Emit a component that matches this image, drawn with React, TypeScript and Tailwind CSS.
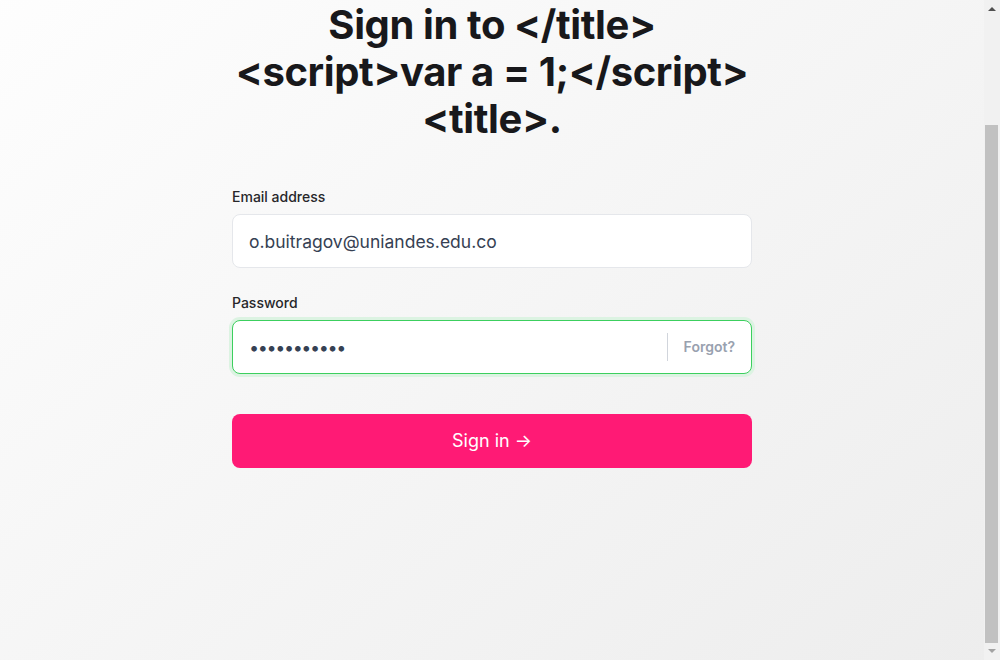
import React, { useEffect } from 'react';

// classic-style scrollbar drawn over the right edge, thumb at the bottom position
const Scrollbar: React.FC = () => (
  <div className="fixed right-0 top-0 flex h-screen w-4 flex-col bg-[#f1f1f1]">
    <div className="flex h-[17px] items-center justify-center">
      <svg width="8" height="5" viewBox="0 0 8 5">
        <path d="M0 5 L4 1 L8 5 Z" fill="#505050" />
      </svg>
    </div>
    <div className="flex-1">
      <div className="ml-px mt-[108px] h-[518px] w-[13px] bg-[#c1c1c1]" />
    </div>
    <div className="flex h-[17px] items-center justify-center">
      <svg width="8" height="5" viewBox="0 0 8 5">
        <path d="M0 0 L4 4 L8 0 Z" fill="#a3a3a3" />
      </svg>
    </div>
  </div>
);

const App: React.FC = () => {
  useEffect(() => {
    window.scrollTo(0, document.documentElement.scrollHeight);
  }, []);

  return (
    <div
      className="min-h-[803px] bg-gradient-to-br from-white to-[#ededed] pb-[192px] pr-4 pt-[144px] text-gray-900"
      style={{ fontFamily: 'Inter, "Noto Sans", sans-serif' }}
    >
      <div className="mx-auto w-[520px]">
        <h1 className="-mx-10 text-center text-[40px] font-bold leading-[47px] tracking-[-0.01em] text-[#18181b]">
          Sign in to &lt;/title&gt;
          <br />
          &lt;script&gt;var a = 1;&lt;/script&gt;
          <br />
          &lt;title&gt;.
        </h1>

        <form className="mt-[45px]" onSubmit={(e) => e.preventDefault()}>
          <label className="block text-sm font-medium leading-5 text-[#27272a]">Email address</label>
          <input
            type="email"
            defaultValue="o.buitragov@uniandes.edu.co"
            className="mt-[7px] block h-[54px] w-full rounded-lg border border-gray-200 bg-white px-4 text-[17.5px] text-gray-700 outline-none"
          />

          <label className="mt-[25px] block text-sm font-medium leading-5 text-[#27272a]">Password</label>
          <div className="mt-[7px] flex h-[54px] w-full items-center rounded-lg border border-[#3ccf5e] bg-white ring-[3px] ring-[#dcf3e2]">
            <input
              type="password"
              defaultValue="abcdefghijk"
              className="h-full min-w-0 flex-1 bg-transparent px-4 text-lg tracking-[-1.4px] text-gray-700 outline-none"
            />
            <div className="h-7 w-px bg-gray-300" />
            <button type="button" className="px-4 text-sm font-semibold text-gray-400">
              Forgot?
            </button>
          </div>

          <button
            type="submit"
            className="mt-10 flex h-[54px] w-full items-center justify-center rounded-lg bg-[#ff1a75] text-lg text-white"
          >
            Sign in →
          </button>
        </form>
      </div>
      <Scrollbar />
    </div>
  );
};

export default App;
